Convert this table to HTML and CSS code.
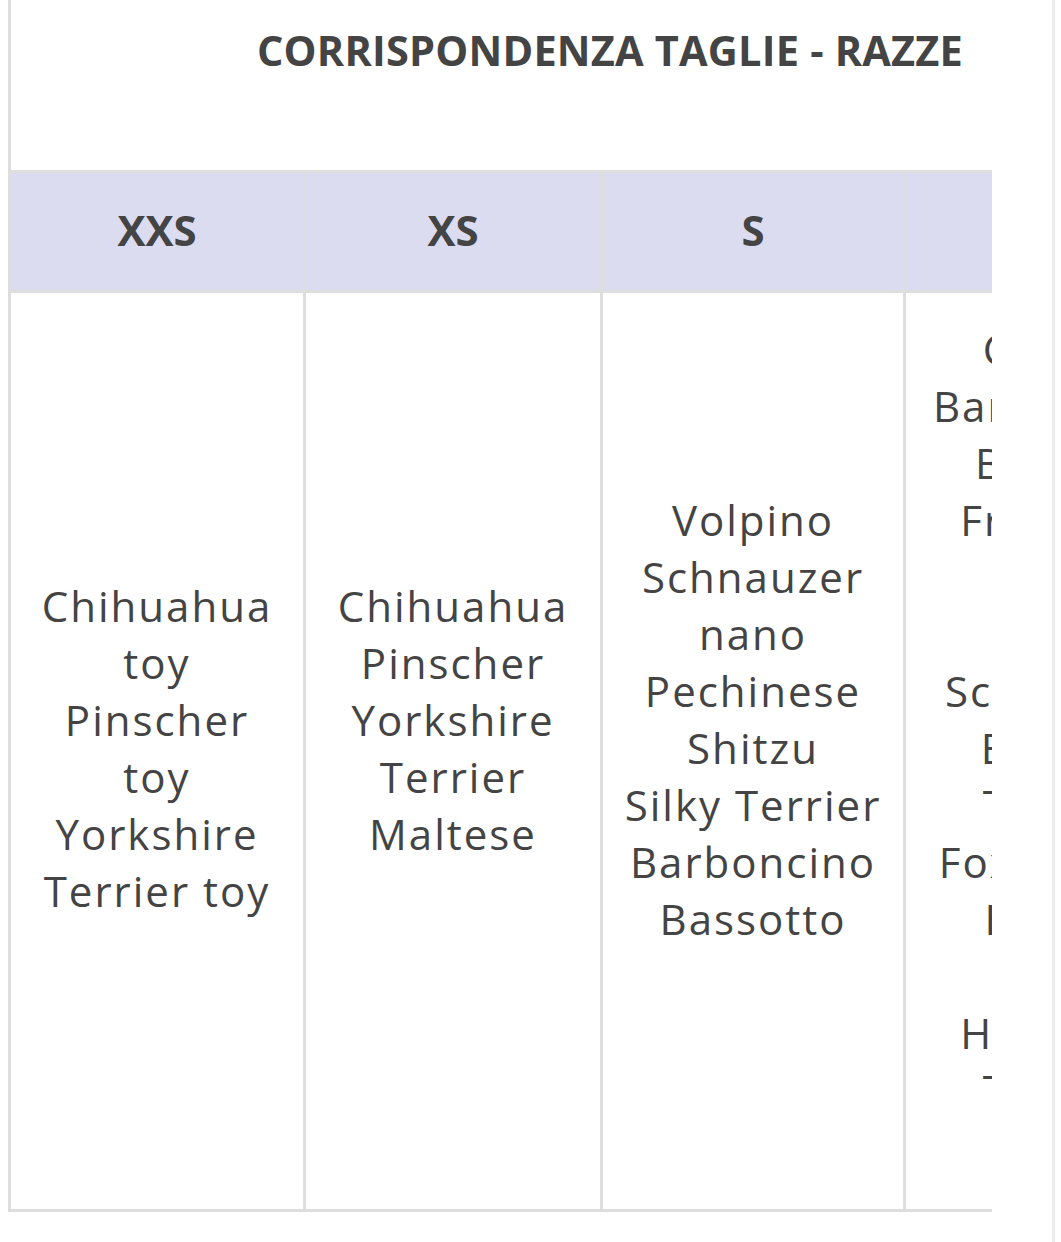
FILE: index.html
```html
<!DOCTYPE html>
<html lang="it">
<head>
<meta charset="utf-8">
<title>Corrispondenza taglie - razze</title>
<link rel="stylesheet" href="styles.css">
</head>
<body>
<div class="page">
  <div class="frame">
    <div class="scroller">
      <div class="sheet">
        <h2 class="title">CORRISPONDENZA TAGLIE - RAZZE</h2>
        <div class="grid">
          <div class="head">XXS</div>
          <div class="head">XS</div>
          <div class="head">S</div>
          <div class="head">M</div>

          <div class="cell">Chihuahua<br>toy<br>Pinscher<br>toy<br>Yorkshire<br>Terrier toy</div>
          <div class="cell cell--trail">Chihuahua<br>Pinscher<br>Yorkshire<br>Terrier<br>Maltese</div>
          <div class="cell cell--trail">Volpino<br>Schnauzer<br>nano<br>Pechinese<br>Shitzu<br>Silky Terrier<br>Barboncino<br>Bassotto</div>
          <div class="cell">Cocker<br>Barboncino<br>Bulldog<br>Francese<br>Corgi<br>Pug<br>Schnauzer<br>Boston<br>Terrier<br>Fox Terrier<br>Beagle<br>West<br>Highland<br>Terrier<br>Shiba</div>
        </div>
      </div>
    </div>
  </div>
</div>
</body>
</html>
```
FILE: styles.css
```css
html, body {
  margin: 0;
  padding: 0;
  background: #ffffff;
}

body {
  font-family: "Open Sans", "Noto Sans", sans-serif;
  color: #444444;
}

.page {
  box-sizing: border-box;
  width: 1055px;
  height: 1242px;
  padding-left: 8px;
  border-right: 3px solid #ececec;
  display: flex;
  align-items: flex-start;
}

.frame {
  width: 981px;
  border-left: 3px solid #dddddd;
}

.scroller {
  width: 981px;
  overflow: hidden;
}

.sheet {
  width: 1198px;
}

.title {
  margin: 0;
  height: 170px;
  box-sizing: border-box;
  padding-top: 23px;
  text-align: center;
  font-size: 41.5px;
  line-height: 54px;
  font-weight: 700;
  letter-spacing: 0.2px;
  color: #444444;
}

.grid {
  display: grid;
  grid-template-columns: 295px 297px 303px 303px;
  grid-template-rows: 120px 919px;
  border-top: 3px solid #e0e0e0;
}

.head,
.cell {
  box-sizing: border-box;
  border-right: 3px solid #dedede;
  text-align: center;
  display: flex;
  align-items: center;
  justify-content: center;
}

.head {
  background: #dcdcf1;
  border-bottom: 3px solid #dedede;
  padding-bottom: 4px;
  font-size: 42px;
  font-weight: 700;
  color: #444444;
}

.cell {
  border-bottom: 3px solid #dddddd;
  padding: 27px 0 34px;
  font-size: 42px;
  line-height: 57px;
  letter-spacing: 2px;
  white-space: nowrap;
}

.cell--trail {
  padding-bottom: 91px;
}
```
